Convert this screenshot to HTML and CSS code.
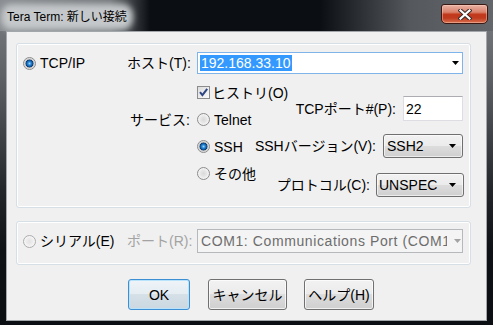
FILE: index.html
```html
<!DOCTYPE html>
<html lang="ja">
<head>
<meta charset="utf-8">
<title>Tera Term: 新しい接続</title>
<link rel="stylesheet" href="styles.css">
</head>
<body>
<div class="window">
  <div class="titlebar">
    <span class="title">Tera Term: 新しい接続</span>
    <div class="close">
      <svg width="14" height="11" viewBox="0 0 14 11"><path d="M2.5 1.5L11.5 9.5M11.5 1.5L2.5 9.5" stroke="#3a2a28" stroke-width="4.2" stroke-linecap="square" fill="none"/><path d="M2.5 1.5L11.5 9.5M11.5 1.5L2.5 9.5" stroke="#ffffff" stroke-width="2.2" stroke-linecap="square" fill="none"/></svg>
    </div>
  </div>
  <div class="panel">
    <div class="group g1">
      <div class="cell-a"><span class="radio on"></span><span>TCP/IP</span></div>
      <div class="lbl">ホスト(T):</div>
      <div class="combo focused"><span class="sel">192.168.33.10</span><span class="arrow"><svg width="7" height="4" viewBox="0 0 7 4"><path d="M0 0H7L3.5 4Z" fill="#000"/></svg></span></div>
      <div class="spacer"></div>
      <div class="lbl svc">サービス:</div>
      <div class="sub">
        <div class="sub-left">
          <div class="opt"><span class="check"><svg width="11" height="11" viewBox="0 0 11 11"><path d="M2 5.2L4.4 8.2L9.2 1.8" stroke="#2f4684" stroke-width="2" fill="none"/></svg></span><span class="opt-text chk">ヒストリ(O)</span></div>
          <div class="opt"><span class="radio"></span><span class="opt-text">Telnet</span></div>
          <div class="opt"><span class="radio on"></span><span class="opt-text">SSH</span></div>
          <div class="opt"><span class="radio"></span><span class="opt-text">その他</span></div>
        </div>
        <div class="sub-right">
          <div class="field f-port"><span>TCPポート#(P):</span><div class="textbox">22</div></div>
          <div class="field f-ssh"><span>SSHバージョン(V):</span><div class="dropdown d-ssh"><span class="dd-text">SSH2</span><svg width="7" height="4" viewBox="0 0 7 4"><path d="M0 0H7L3.5 4Z" fill="#000"/></svg></div></div>
          <div class="field f-proto"><span>プロトコル(C):</span><div class="dropdown d-proto"><span class="dd-text">UNSPEC</span><svg width="7" height="4" viewBox="0 0 7 4"><path d="M0 0H7L3.5 4Z" fill="#000"/></svg></div></div>
        </div>
      </div>
    </div>
    <div class="group g2">
      <div class="cell-a"><span class="radio pale"></span><span>シリアル(E)</span></div>
      <div class="lbl dim">ポート(R):</div>
      <div class="combo disabled"><span class="com-text">COM1: Communications Port (COM1)</span><span class="arrow"><svg width="7" height="4" viewBox="0 0 7 4"><path d="M0 0H7L3.5 4Z" fill="#a3a3a3"/></svg></span></div>
    </div>
    <div class="buttons">
      <div class="btn default b-ok">OK</div>
      <div class="btn b-cancel">キャンセル</div>
      <div class="btn b-help">ヘルプ(H)</div>
    </div>
  </div>
</div>
</body>
</html>
```

FILE: styles.css
```css
html, body {
  margin: 0;
  padding: 0;
}
body {
  width: 493px;
  height: 325px;
  overflow: hidden;
  background: #0b0e12;
  font-family: "Liberation Sans", "Noto Sans CJK JP", sans-serif;
  font-size: 14px;
  line-height: 16px;
  color: #000;
}
.window {
  width: 493px;
  height: 325px;
  display: flex;
  flex-direction: column;
  background: linear-gradient(180deg, #7c8084 0, #5c6064 80px, #23272b 190px, #0e1216 250px, #0b0e12 100%);
}
.titlebar {
  height: 31px;
  flex: none;
  display: flex;
  justify-content: space-between;
  align-items: flex-start;
  background: linear-gradient(90deg, #8a8e92 0, #74787c 110px, #0b0e12 150px, #0b0e12 320px, #55595d 410px, #63676b 100%);
}
.title {
  margin: 10px 0 0 7px;
  font-size: 12px;
  line-height: 14px;
  white-space: nowrap;
  color: #000;
  background: #c5c8ca;
  border-radius: 5px;
  box-shadow: 0 0 6px 6px #c5c8ca;
}
.close {
  margin: 4px 5px 0 0;
  width: 47px;
  height: 20px;
  box-sizing: border-box;
  border: 1px solid #3b1912;
  border-radius: 3px 3px 5px 5px;
  background: linear-gradient(180deg, #e9b2a4 0, #d9816a 40%, #c2391c 52%, #bf3a1e 72%, #d8714f 100%);
  box-shadow: inset 0 0 0 1px rgba(255, 210, 195, 0.45);
  display: flex;
  align-items: center;
  justify-content: center;
}
.panel {
  flex: 1;
  margin: 0 6px 4px 6px;
  background: #f0f0f0;
  border: 1px solid #a2a7ab;
  display: flex;
  flex-direction: column;
}
.group {
  box-sizing: border-box;
  width: 455px;
  margin-left: 9px;
  border: 1px solid #d5dfe5;
  border-radius: 3px;
  box-shadow: inset 0 0 0 1px #ffffff;
  display: grid;
}
.g1 {
  margin-top: 11px;
  height: 165px;
  padding: 8px 0 0 6px;
  grid-template-columns: 104px 70px 266px;
  grid-template-rows: 22px auto;
}
.g2 {
  margin-top: 13px;
  height: 44px;
  padding: 7px 0 0 6px;
  grid-template-columns: 104px 70px 266px;
  grid-template-rows: 24px;
  align-items: center;
}
.cell-a {
  display: flex;
  align-items: center;
  white-space: nowrap;
}
.lbl {
  text-align: right;
  padding-right: 7px;
  white-space: nowrap;
  align-self: center;
}
.lbl.svc {
  align-self: start;
  margin-top: 38px;
}
.g2 .lbl {
  padding-right: 5px;
}
.dim {
  color: #a3a3a3;
}
.radio {
  flex: none;
  width: 13px;
  height: 13px;
  box-sizing: border-box;
  border-radius: 50%;
  border: 1px solid #8c8c8c;
  background: radial-gradient(circle, #d9d9d9 0, #e6e6e6 3px, #f7f7f7 6px);
  margin-right: 4px;
}
.radio.on {
  background: radial-gradient(circle, #9ad6ff 0, #2d8ad8 1.6px, #10579f 3px, #0b3b70 3.7px, #bdbdbd 4.2px, #e8e8e8 5.5px);
}
.radio.pale {
  border-color: #acacac;
  background: radial-gradient(circle, #e2e2e2 0, #ececec 3px, #f8f8f8 6px);
}
.cell-a .radio {
  margin-right: 4px;
}
.combo {
  box-sizing: border-box;
  display: flex;
  align-items: center;
  background: #fff;
  border: 1px solid #abadb3;
}
.combo.focused {
  border-color: #7eb4ea;
  padding-left: 2px;
}
.sel {
  background: #3399ff;
  color: #fff;
  line-height: 16px;
  padding: 0 1px;
}
.arrow {
  margin-left: auto;
  margin-right: 3px;
  display: flex;
  align-items: center;
}
.combo.disabled {
  height: 24px;
  background: #f4f4f4;
  border-color: #b5b9bc;
  padding-left: 3px;
  color: #6d6d6d;
}
.com-text {
  width: 246px;
  flex: none;
  overflow: hidden;
  white-space: nowrap;
  letter-spacing: 0.6px;
}
.combo.disabled .arrow {
  margin-right: 1px;
}
.sub {
  display: flex;
}
.sub-left {
  width: 56px;
  flex: none;
  margin-top: 5px;
  display: flex;
  flex-direction: column;
}
.opt {
  height: 27px;
  display: flex;
  align-items: center;
  white-space: nowrap;
}
.opt .radio {
  margin-right: 4px;
}
.check {
  flex: none;
  width: 13px;
  height: 13px;
  box-sizing: border-box;
  border: 1px solid #8c8c8c;
  background: linear-gradient(135deg, #dcdcdc, #fbfbfb);
  display: flex;
  align-items: center;
  justify-content: center;
  margin-right: 2px;
}
.sub-right {
  flex: 1;
  display: flex;
  flex-direction: column;
  align-items: flex-end;
}
.field {
  display: flex;
  align-items: center;
  gap: 7px;
  white-space: nowrap;
}
.f-port {
  margin-top: 22px;
}
.f-ssh {
  margin-top: 13px;
}
.f-proto {
  margin-top: 15px;
  gap: 6px;
  margin-right: -1px;
}
.textbox {
  box-sizing: border-box;
  width: 60px;
  height: 25px;
  background: #fff;
  border: 1px solid #dcdee3;
  border-top-color: #abadb3;
  padding-left: 2px;
  display: flex;
  align-items: center;
}
.dropdown {
  box-sizing: border-box;
  height: 24px;
  border: 1px solid #707070;
  border-radius: 3px;
  background: linear-gradient(180deg, #f2f2f2 0, #ebebeb 50%, #dddddd 50%, #cfcfcf 100%);
  box-shadow: inset 0 0 0 1px rgba(255, 255, 255, 0.6);
  display: flex;
  align-items: center;
  padding: 0 6px 0 3px;
}
.dd-text {
  flex: 1;
}
.d-ssh {
  width: 80px;
}
.d-proto {
  width: 88px;
  padding-left: 2px;
  padding-right: 7px;
}
.buttons {
  display: flex;
  margin-top: 14px;
  padding-left: 121px;
}
.btn {
  box-sizing: border-box;
  height: 31px;
  border: 1px solid #707070;
  border-radius: 3px;
  background: linear-gradient(180deg, #f2f2f2 0, #ebebeb 50%, #dddddd 50%, #cfcfcf 100%);
  box-shadow: inset 0 0 0 1px rgba(255, 255, 255, 0.7);
  display: flex;
  align-items: center;
  justify-content: center;
  white-space: nowrap;
}
.btn.default {
  border-color: #3c8fd3;
  background: linear-gradient(180deg, #eef4f8 0, #e5edf2 50%, #d5e0e7 50%, #cbd8e1 100%);
  box-shadow: inset 0 0 0 1px #b9e2fb;
}
.b-ok {
  width: 62px;
}
.b-cancel {
  width: 79px;
  margin-left: 18px;
}
.b-help {
  width: 70px;
  margin-left: 17px;
}
```
